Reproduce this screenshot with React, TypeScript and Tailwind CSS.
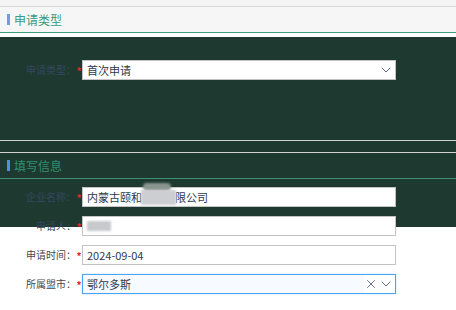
import { ChevronDown, X } from "lucide-react";

const font = "font-['Noto_Sans_CJK_SC','Noto_Sans',sans-serif]";

function SectionTitle({ text, dark }: { text: string; dark?: boolean }) {
  return (
    <div
      className={`flex h-[25px] items-center pl-[7px] ${
        dark ? "" : "bg-[#f6f6f6]"
      }`}
    >
      <span
        className={`mr-[4px] h-[11px] w-[3px] ${
          dark ? "bg-[#4f8fdc]" : "bg-[#6a9fea]"
        }`}
      />
      <span
        className={`text-[12px] leading-none ${
          dark ? "text-[#2f8f6e]" : "text-[#3b9b7b]"
        }`}
      >
        {text}
      </span>
    </div>
  );
}

function Row({
  label,
  dark,
  children,
}: {
  label: string;
  dark?: boolean;
  children: React.ReactNode;
}) {
  return (
    <div className="flex h-[20px] items-center">
      <span
        className={`w-[76px] text-right text-[10px] leading-none ${
          dark ? "text-[#33475f]" : "text-[#4a4a4a]"
        }`}
      >
        {label}
      </span>
      <span className="w-[6px] pt-[2px] text-center text-[10px] font-bold leading-none text-[#e32626]">
        *
      </span>
      {children}
    </div>
  );
}

function Input({
  children,
  focus,
  select,
  clear,
}: {
  children?: React.ReactNode;
  focus?: boolean;
  select?: boolean;
  clear?: boolean;
}) {
  return (
    <div
      className={`relative flex h-[20px] w-[314px] items-center border bg-white ${
        focus
          ? "border-[#4ba3f2] shadow-[0_0_2px_rgba(75,163,242,0.35)]"
          : "border-[#c3c3c3]"
      }`}
    >
      <div
        className={`flex h-full flex-1 items-center pl-[4px] text-[11px] leading-none text-[#2d3a4f] ${
          focus ? "bg-[#f7faff]" : ""
        }`}
      >
        {children}
      </div>
      {clear && (
        <X size={14} strokeWidth={1.6} className="shrink-0 text-[#5b6a86]" />
      )}
      {select && (
        <ChevronDown
          size={16}
          strokeWidth={1.5}
          className="mr-[1px] shrink-0 text-[#5b6a86]"
        />
      )}
    </div>
  );
}

export default function App() {
  return (
    <div
      className={`relative h-[310px] w-[456px] overflow-hidden bg-white ${font}`}
    >
      {/* dark mask layer behind the form */}
      <div className="absolute left-0 top-[37px] h-[190px] w-full bg-[#1e3a30]" />

      <div className="relative">
        <div className="h-[6px] bg-[#f4f4f4]" />
        <div className="h-px bg-[#d6d6d6]" />
        <SectionTitle text="申请类型" />
        <div className="h-px bg-[#3d9c7c]" />
        <div className="h-[4px]" />

        <div className="pt-[23px]">
          <Row label="申请类型：" dark>
            <Input select>首次申请</Input>
          </Row>
        </div>

        <div className="h-[60px]" />
        <div className="h-px bg-[#cfd3d0]" />
        <div className="h-[11px]" />
        <div className="h-px bg-[#cfd3d0]" />
        <SectionTitle text="填写信息" dark />
        <div className="h-px bg-[#3f8f72]" />

        <div className="flex flex-col gap-[9px] pt-[8px]">
          <Row label="企业名称：" dark>
            <Input>
              <span>内蒙古颐和</span>
              <span className="relative mx-[-1px] inline-block h-[15px] w-[35px]">
                <span className="absolute left-[2px] top-[-7px] h-[8px] w-[28px] rounded-sm bg-[#8a9590] blur-[1px]" />
                <span className="absolute inset-0 bg-[#cdced2] blur-[1px]" />
              </span>
              <span>限公司</span>
            </Input>
          </Row>
          <Row label="申请人：" dark>
            <Input>
              <span className="relative inline-block h-[10px] w-[24px]">
                <span className="absolute inset-0 bg-[#c8c9cd] blur-[1px]" />
              </span>
            </Input>
          </Row>
          <Row label="申请时间：">
            <Input>2024-09-04</Input>
          </Row>
          <Row label="所属盟市：">
            <Input focus select clear>
              鄂尔多斯
            </Input>
          </Row>
        </div>
      </div>
    </div>
  );
}
